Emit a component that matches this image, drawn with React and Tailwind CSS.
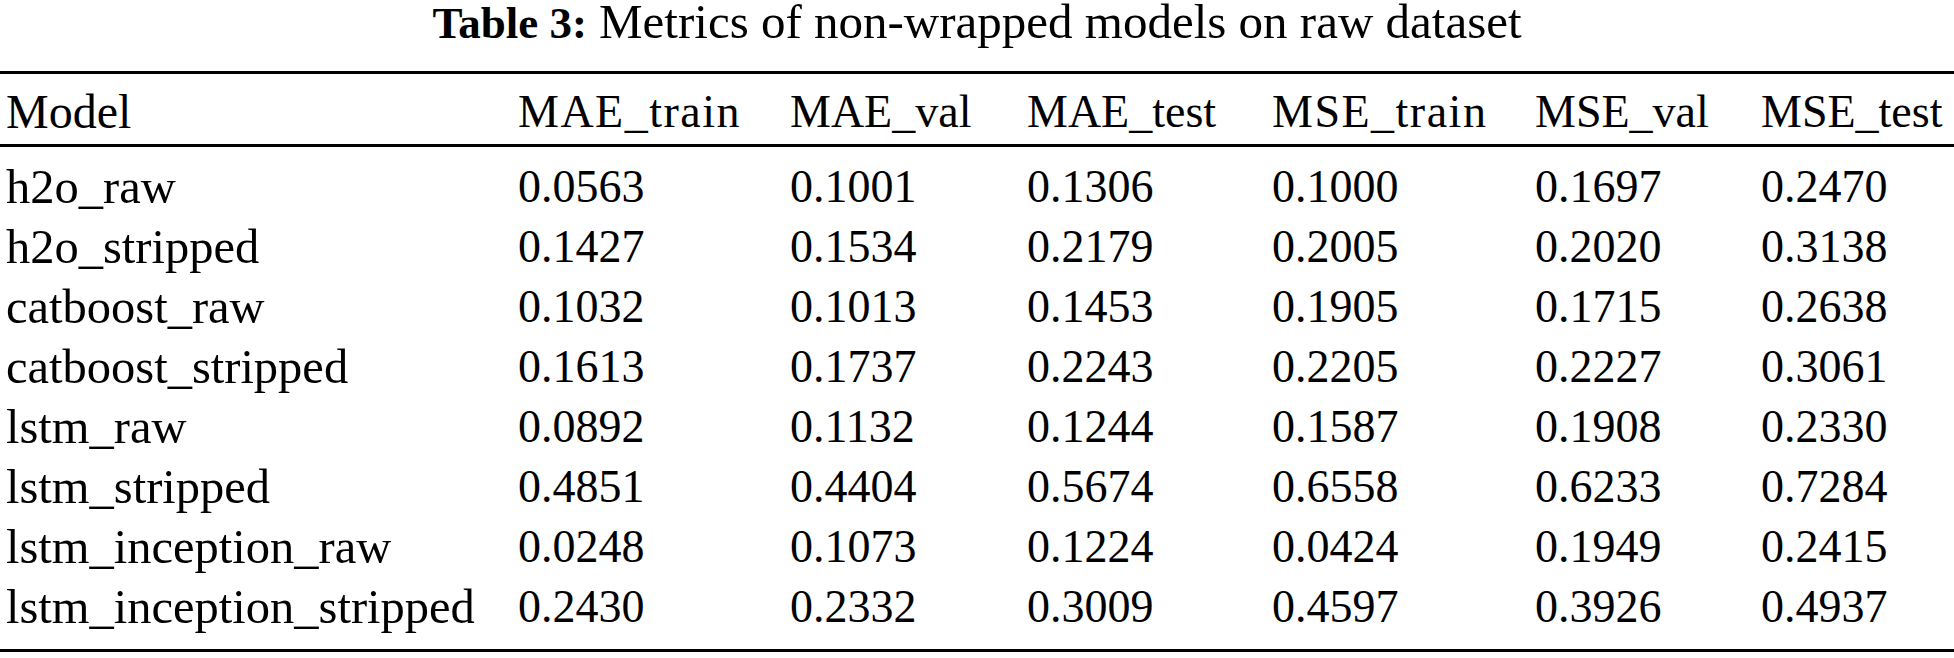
const headers = ["Model", "MAE_train", "MAE_val", "MAE_test", "MSE_train", "MSE_val", "MSE_test"];
const rows = [
  ["h2o_raw", "0.0563", "0.1001", "0.1306", "0.1000", "0.1697", "0.2470"],
  ["h2o_stripped", "0.1427", "0.1534", "0.2179", "0.2005", "0.2020", "0.3138"],
  ["catboost_raw", "0.1032", "0.1013", "0.1453", "0.1905", "0.1715", "0.2638"],
  ["catboost_stripped", "0.1613", "0.1737", "0.2243", "0.2205", "0.2227", "0.3061"],
  ["lstm_raw", "0.0892", "0.1132", "0.1244", "0.1587", "0.1908", "0.2330"],
  ["lstm_stripped", "0.4851", "0.4404", "0.5674", "0.6558", "0.6233", "0.7284"],
  ["lstm_inception_raw", "0.0248", "0.1073", "0.1224", "0.0424", "0.1949", "0.2415"],
  ["lstm_inception_stripped", "0.2430", "0.2332", "0.3009", "0.4597", "0.3926", "0.4937"],
];

const cols = "grid grid-cols-[512px_272px_237px_245px_263px_226px_1fr] pl-[6px]";

export default function App() {
  return (
    <div className="w-[1954px] h-[658px] bg-white text-black overflow-hidden" style={{ fontFamily: '"Liberation Serif", "Times New Roman", serif' }}>
      <div className="h-[71px] flex items-baseline justify-center leading-[44px]">
        <span className="font-bold text-[45px]">Table 3:</span>
        <span className="ml-[12px] text-[49px]">Metrics of non-wrapped models on raw dataset</span>
      </div>
      <div className="border-t-[3px] border-b-[3px] border-black">
        <div className={`${cols} h-[73px] items-center border-b-[3px] border-black text-[46px] leading-[60px] pt-[6px]`}>
          {headers.map((h, i) => (
            <div
              key={h}
              className={`whitespace-nowrap ${i === 0 ? "text-[48px]" : ""} ${h.endsWith("train") ? "tracking-[1.5px]" : ""}`}
            >
              {h}
            </div>
          ))}
        </div>
        <div className="pt-[10px] pb-[12px]">
          {rows.map((r) => (
            <div key={r[0]} className={`${cols} h-[60px] items-center text-[46px] leading-[60px]`}>
              {r.map((c, i) => (
                <div key={i} className={`whitespace-nowrap ${i === 0 ? "text-[48.5px]" : ""}`}>{c}</div>
              ))}
            </div>
          ))}
        </div>
      </div>
    </div>
  );
}
